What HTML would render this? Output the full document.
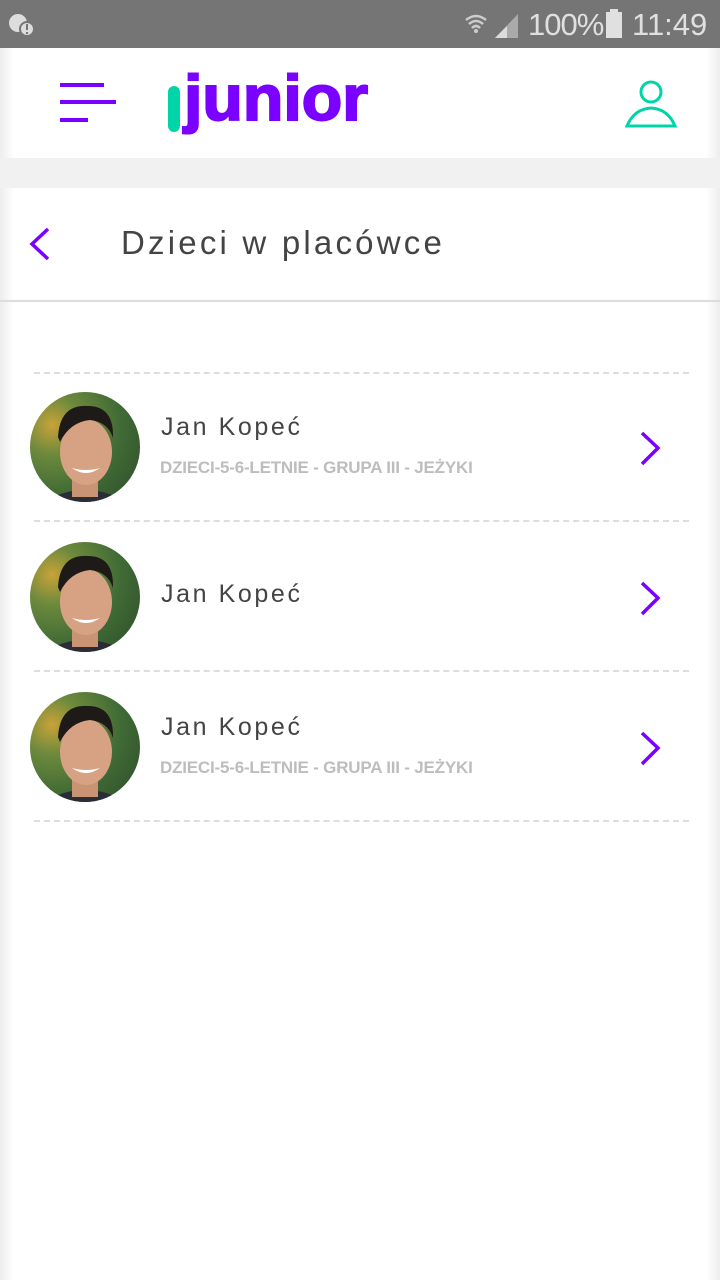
<!DOCTYPE html>
<html><head><meta charset="utf-8"><style>
*{margin:0;padding:0;box-sizing:border-box}
body{width:720px;height:1280px;background:#fff;position:relative;overflow:hidden;font-family:"Liberation Sans",sans-serif}
.sb{position:absolute;top:0;left:0;width:720px;height:48px;background:#757575;color:#e8e8e8}
.edge{position:absolute;top:48px;bottom:0;width:14px}
.el{left:0;background:linear-gradient(90deg,rgba(0,0,0,.07),rgba(0,0,0,0))}
.er{right:0;background:linear-gradient(270deg,rgba(0,0,0,.07),rgba(0,0,0,0))}
.gap{position:absolute;top:158px;left:0;width:720px;height:30px;background:#f1f1f1}
.title{position:absolute;top:224px;left:121px;font-size:33px;color:#444;letter-spacing:3.2px}
.hr{position:absolute;top:300px;left:0;width:720px;height:2px;background:#ddd}
.dash{position:absolute;left:34px;width:655px;border-top:2px dashed #ddd}
.av{position:absolute;left:30px;width:110px;height:110px;border-radius:50%;overflow:hidden;background:radial-gradient(circle at 20% 30%,#c9a23a 0,#6d8a3c 25%,#3f6a35 60%,#2e4a2a 100%)}
.name{position:absolute;left:161px;font-size:25px;color:#444;letter-spacing:2.6px}
.sub{position:absolute;left:160px;font-size:17px;font-weight:bold;color:#bdbdbd;letter-spacing:-0.2px}
.chev{position:absolute;left:638px}
</style></head><body>
<div class="sb">
<svg style="position:absolute;left:8px;top:12px" width="28" height="26"><circle cx="10" cy="11" r="9" fill="#ddd"/><circle cx="19" cy="17" r="7" fill="#ddd" stroke="#757575" stroke-width="2"/><rect x="18" y="12" width="2" height="6" fill="#757575"/><rect x="18" y="20" width="2" height="2" fill="#757575"/></svg>
<svg style="position:absolute;left:464px;top:12px" width="56" height="28"><path d="M2 8 Q12 0 22 8 M5 12 Q12 6 19 12 M8 16 Q12 12 16 16" stroke="#ccc" stroke-width="2.5" fill="none"/><circle cx="12" cy="19" r="2" fill="#ccc"/><path d="M31 26 L54 26 L54 2 Z" fill="#aaa"/><path d="M31 26 L43 26 L43 14 Z" fill="#ddd"/></svg>
<div style="position:absolute;left:528px;top:7px;font-size:31px;color:#e0e0e0;letter-spacing:-1px">100%</div>
<div style="position:absolute;left:606px;top:12px;width:16px;height:26px;background:#e0e0e0"></div>
<div style="position:absolute;left:610px;top:9px;width:8px;height:3px;background:#e0e0e0"></div>
<div style="position:absolute;left:632px;top:7px;font-size:31px;color:#e0e0e0">11:49</div>
</div>
<div class="edge el"></div><div class="edge er"></div>
<div style="position:absolute;left:60px;top:83px;width:44px;height:4px;background:#7a00ff"></div>
<div style="position:absolute;left:60px;top:100px;width:56px;height:4px;background:#7a00ff"></div>
<div style="position:absolute;left:60px;top:118px;width:28px;height:4px;background:#7a00ff"></div>
<svg style="position:absolute;left:160px;top:64px" width="220" height="76">
<rect x="8" y="22" width="12" height="46" rx="6" fill="#00d4a8"/>
<text x="24" y="56" font-family="Liberation Sans,sans-serif" font-weight="bold" font-size="64" fill="#7a00ff" stroke="#7a00ff" stroke-width="2" textLength="184" lengthAdjust="spacingAndGlyphs">junior</text>
</svg>
<svg style="position:absolute;left:624px;top:78px" width="54" height="52"><circle cx="27" cy="14" r="10" fill="none" stroke="#00d4a8" stroke-width="3"/><path d="M3 48 Q10 31 27 30 Q44 31 51 48 Z" fill="none" stroke="#00d4a8" stroke-width="3"/></svg>
<div class="gap"></div>
<svg style="position:absolute;left:26px;top:226px" width="30" height="36"><path d="M22 3 L6 18 L22 33" stroke="#7a00ff" stroke-width="3.5" fill="none"/></svg>
<div class="title">Dzieci w placówce</div>
<div class="hr"></div>
<div class="dash" style="top:372px"></div>
<div class="dash" style="top:520px"></div>
<div class="dash" style="top:670px"></div>
<div class="dash" style="top:820px"></div>
<div class="av" style="top:392px"><svg width="110" height="110"><ellipse cx="55" cy="118" rx="40" ry="20" fill="#2a2c36"/><rect x="42" y="80" width="26" height="25" fill="#c99474"/><ellipse cx="56" cy="60" rx="26" ry="33" fill="#d7a283"/><path d="M28 45 Q30 12 58 14 Q84 14 83 46 Q78 30 60 28 Q40 30 30 50Z" fill="#1e1a18"/><path d="M42 76 Q56 86 70 76 Q56 80 42 76Z" fill="#fff"/></svg></div>
<div class="name" style="top:413px">Jan Kopeć</div>
<div class="sub" style="top:458px">DZIECI-5-6-LETNIE - GRUPA III - JEŻYKI</div>
<svg class="chev" style="top:430px" width="26" height="38"><path d="M4 3 L20 18 L4 34" stroke="#7a00ff" stroke-width="3.5" fill="none"/></svg>
<div class="av" style="top:542px"><svg width="110" height="110"><ellipse cx="55" cy="118" rx="40" ry="20" fill="#2a2c36"/><rect x="42" y="80" width="26" height="25" fill="#c99474"/><ellipse cx="56" cy="60" rx="26" ry="33" fill="#d7a283"/><path d="M28 45 Q30 12 58 14 Q84 14 83 46 Q78 30 60 28 Q40 30 30 50Z" fill="#1e1a18"/><path d="M42 76 Q56 86 70 76 Q56 80 42 76Z" fill="#fff"/></svg></div>
<div class="name" style="top:580px">Jan Kopeć</div>
<svg class="chev" style="top:580px" width="26" height="38"><path d="M4 3 L20 18 L4 34" stroke="#7a00ff" stroke-width="3.5" fill="none"/></svg>
<div class="av" style="top:692px"><svg width="110" height="110"><ellipse cx="55" cy="118" rx="40" ry="20" fill="#2a2c36"/><rect x="42" y="80" width="26" height="25" fill="#c99474"/><ellipse cx="56" cy="60" rx="26" ry="33" fill="#d7a283"/><path d="M28 45 Q30 12 58 14 Q84 14 83 46 Q78 30 60 28 Q40 30 30 50Z" fill="#1e1a18"/><path d="M42 76 Q56 86 70 76 Q56 80 42 76Z" fill="#fff"/></svg></div>
<div class="name" style="top:713px">Jan Kopeć</div>
<div class="sub" style="top:758px">DZIECI-5-6-LETNIE - GRUPA III - JEŻYKI</div>
<svg class="chev" style="top:730px" width="26" height="38"><path d="M4 3 L20 18 L4 34" stroke="#7a00ff" stroke-width="3.5" fill="none"/></svg>
</body></html>
